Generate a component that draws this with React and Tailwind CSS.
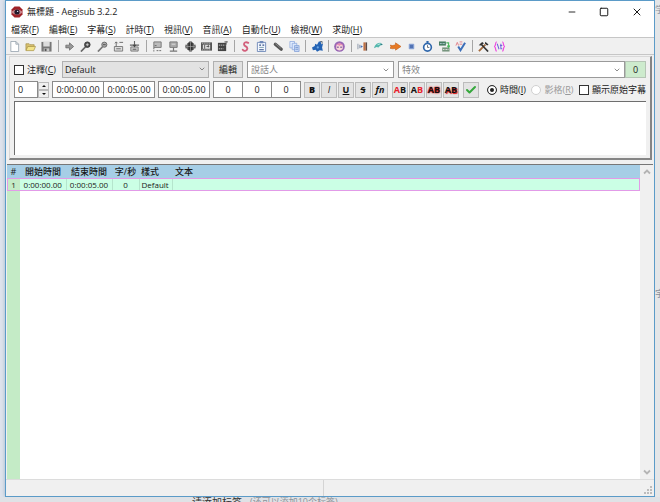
import { useState } from 'react'
import { Minus, Square, X, ChevronDown, Check } from 'lucide-react'

const MENUS = [
  ['檔案', 'F'],
  ['編輯', 'E'],
  ['字幕', 'S'],
  ['計時', 'T'],
  ['視訊', 'V'],
  ['音訊', 'A'],
  ['自動化', 'U'],
  ['檢視', 'W'],
  ['求助', 'H'],
]

// All toolbar glyphs share a 12x12 box
const ICONS = {
  new: <path d="M2 .5h5.5l3 3v8H2zM7.500 .5v3h3" fill="#fff" stroke="#8b98a5" strokeWidth=".8" />,
  open: (
    <>
      <path d="M1 10V3h3.500l1 1H10v2" fill="#d8c070" stroke="#a08c40" strokeWidth=".7" />
      <path d="M1 10.500 3 6h8.500l-2 4.500z" fill="#f3e38a" stroke="#a08c40" strokeWidth=".7" />
    </>
  ),
  save: (
    <>
      <path d="M.5 1h11v10.500H.5z" fill="#777" />
      <path d="M2.500 1h7v5h-7z" fill="#dcdcdc" />
      <path d="M3 8h6v3.500H3z" fill="#c8c8c8" />
      <path d="M4 8.500h2v2.500H4z" fill="#555" />
    </>
  ),
  jump: <path d="M2 4.500h4V2l4.500 4L6 10V7.500H2z" fill="#999" stroke="#666" strokeWidth=".8" />,
  zoomIn: (
    <>
      <path d="M1 11.500 6 6.500" stroke="#666" strokeWidth="1.800" />
      <circle cx="8" cy="4" r="3" fill="#555" stroke="#333" />
      <path d="M6.500 4h3M8 2.500v3" stroke="#ddd" strokeWidth=".8" />
    </>
  ),
  zoomOut: (
    <>
      <path d="M1 11.500 6 6.500" stroke="#777" strokeWidth="1.800" />
      <circle cx="8" cy="4" r="2.800" fill="#aaa" stroke="#666" />
      <path d="M6.500 4h3" stroke="#444" strokeWidth=".9" />
    </>
  ),
  subStart: (
    <>
      <path d="M1.500 6v5h9V6z" fill="#ddd" stroke="#777" />
      <path d="M3.500 6V1M2 2.500 3.500 1 5 2.500M7 1.500h4" stroke="#666" fill="none" />
      <path d="M3.500 8.500h5" stroke="#666" />
    </>
  ),
  subEnd: (
    <>
      <path d="M2 6.500v4.500h8V6.500z" fill="#ccc" stroke="#777" />
      <path d="M6 0v4M1 4.500h10" stroke="#666" strokeWidth="1.200" />
      <path d="m4 4 2 3 2-3z" fill="#444" />
      <path d="M4 9h4" stroke="#555" />
    </>
  ),
  snapStart: (
    <>
      <path d="M2 1h8v6H2z" fill="#bbb" stroke="#777" />
      <path d="M3 5h3M2 7v4.500M5 10.500h6" stroke="#666" strokeDasharray="2 1" />
    </>
  ),
  snapEnd: (
    <>
      <path d="M2 1h8v6H2z" fill="#aaa" stroke="#777" />
      <path d="M6 7v4M2 11h8" stroke="#777" strokeWidth="1.300" />
      <path d="M4 3.500h4" stroke="#ddd" />
    </>
  ),
  snapScene: (
    <>
      <circle cx="6" cy="6" r="4.800" fill="#333" />
      <path d="M0 6h12M6 1v10M3 2.500v7M9 2.500v7" stroke="#aaa" strokeWidth=".7" />
      <path d="M0 4v4M12 4v4M4.500 0h3M4.500 12h3" stroke="#333" />
    </>
  ),
  shift: (
    <>
      <path d="M0 1.500h12v9H0z" fill="#555" />
      <path d="M2 4h8v4.500H2z" fill="#ddd" />
      <path d="M4 4v4.500M6 6h3M8 4v3" stroke="#555" />
      <path d="M1 2.500h10M1 9.600h10" stroke="#ddd" strokeWidth=".8" strokeDasharray="1 1" />
    </>
  ),
  shiftPlay: (
    <>
      <path d="M1 2h9v9H1z" fill="#444" />
      <path d="M2 4.500h7M2 8.500h5" stroke="#ccc" strokeDasharray="1.500 .7" />
      <path d="M10 0v4M8 1h4" stroke="#666" />
    </>
  ),
  style: (
    <path d="M9 2C6 .5 4 2 4.500 4s4 2 3.500 4.500S4.500 11.500 3 9.500" fill="none" stroke="#d2607c" strokeWidth="2" strokeLinecap="round" />
  ),
  props: (
    <>
      <path d="M1.500 1.500h9v10h-9z" fill="#f4f8ff" stroke="#6f89b8" />
      <path d="M4 0h4v2.500H4z" fill="#6f89b8" />
      <path d="M3.500 4.500h2M7 4.500h2M3.500 9.500h5" stroke="#334f86" strokeWidth="1.200" />
      <path d="M3.500 7h5" stroke="#79a" />
    </>
  ),
  attach: (
    <>
      <path d="m2.500 3.500 6.500 5.500" stroke="#555" strokeWidth="3.500" strokeLinecap="round" />
      <path d="m2.500 2.800 6 5" stroke="#999" strokeWidth=".8" />
    </>
  ),
  fonts: (
    <>
      <path d="M1 .5h5v7H1z" fill="#e6efff" stroke="#86a5dc" strokeWidth=".8" />
      <path d="M3.500 2.500h5v7h-5z" fill="#dbe7fb" stroke="#86a5dc" strokeWidth=".8" />
      <path d="M6 5h5v6.500H6z" fill="#c6d8f6" stroke="#7d9bd5" strokeWidth=".8" />
      <path d="M7 7h3M7 9h3" stroke="#5678bd" strokeWidth=".7" />
    </>
  ),
  automation: (
    <>
      <path d="M0 7 3 5.500l.5-2.500 2 1L7.500.5h2L10 3.500l2-.5-1 4 .8 3.500-3.300-.5-3 1.800L4 9.500 1 10z" fill="#2463b4" />
      <circle cx="6.300" cy="7" r="1.200" fill="#6ba6e4" />
      <path d="M9 .5h2v2.500" fill="none" stroke="#345" strokeWidth=".8" />
    </>
  ),
  assdraw: (
    <>
      <circle cx="6" cy="6" r="5.800" fill="#9867b5" />
      <path d="M2.500 5C3 2 9 2 9.500 5v3C9 11 3 11 2.500 8z" fill="#f8d9d8" />
      <path d="M2 5.500c1-4 7-4 8 0L7.500 4 6 5.500 4 4z" fill="#e78bb5" />
      <path d="M4.300 6v1.600M7.700 6v1.600" stroke="#5d3a91" strokeWidth="1.200" />
    </>
  ),
  shiftTimes: (
    <>
      <path d="M1 3v6M3 4v4" stroke="#9aa4b4" strokeWidth="1.200" />
      <path d="M4 4.500v3l2.500-1.500z" fill="#456eb8" />
      <path d="M7 1.500h2.500v9H7z" fill="#c06f42" />
      <path d="M9.500 1.500h1.500v9H9.500z" fill="#5b4a47" />
    </>
  ),
  styleAssist: (
    <>
      <path d="M1 8c1-4 4-6 7-6l3 2-3 1-2 2-2-.5z" fill="#55b7ad" />
      <path d="M5 4 8 3" stroke="#c8f0ea" />
      <circle cx="9" cy="3.500" r=".6" fill="#246" />
    </>
  ),
  translate: <path d="M0 4.500 3 5l3-1V2L12 6l-6 4V8L3 8.500 0 8l1-1.800z" fill="#e77a24" stroke="#bd5915" strokeWidth=".6" />,
  resample: <path d="M3.500 3.500h5v5h-5z" fill="#5273b4" stroke="#8ca6d8" />,
  timing: (
    <>
      <circle cx="6" cy="6.800" r="4.200" fill="#fff" stroke="#2f67ac" strokeWidth="1.800" />
      <path d="M6 4.500v2.500h2" stroke="#345" fill="none" strokeWidth=".8" />
      <path d="M4.800.8h2.400M6 1v1.500" stroke="#2f67ac" strokeWidth="1.500" />
    </>
  ),
  kanji: (
    <>
      <path d="M0 .5h7.500v4.500H0z" fill="#467b61" />
      <path d="M1 2.800h5.500" stroke="#cde" strokeDasharray="1 .6" />
      <path d="M3.500 7h8v4.500h-8z" fill="#77957e" />
      <path d="M4.500 9.300h6" stroke="#eee" strokeDasharray="1 .6" />
      <path d="M8 2h2.500v4.500M9 5l1.500 2L12 5" fill="none" stroke="#4bb75d" strokeWidth="1.200" />
    </>
  ),
  spell: (
    <>
      <path d="m3.500 6 2.500 4L11 2" fill="none" stroke="#3d6fb9" strokeWidth="2.200" />
      <path d="m1 5 1.500-3.500L4 5M5 1h3M5 3.500h3" fill="none" stroke="#e07c85" />
    </>
  ),
  options: (
    <>
      <path d="M1 11 8 4" stroke="#a46a3c" strokeWidth="2" />
      <path d="m3 3 8 8.500" stroke="#333" strokeWidth="1.800" />
      <path d="M.8 4.500 4.500 1l2 1.500L3 5zM8 .8l3.500 3L10 5 7.500 3z" fill="#333" />
    </>
  ),
  tags: (
    <>
      <path d="M3 1C1 1 2.500 5 .5 6 2.500 7 1 11 3 11M9 1c2 0 .5 4 2.500 5-2 1-.5 5-2.500 5" fill="none" stroke="#ee4be0" strokeWidth="1.300" />
      <path d="m3.500 3 2 6M7.500 3v5.500H9M6.500 5H9" fill="none" stroke="#6c65da" strokeWidth="1.100" />
    </>
  ),
}

const TOOLS = [
  'new', 'open', 'save', '|',
  'jump', 'zoomIn', 'zoomOut', 'subStart', 'subEnd', '|',
  'snapStart', 'snapEnd', 'snapScene', 'shift', 'shiftPlay', '|',
  'style', 'props', 'attach', 'fonts', '|',
  'automation', '|',
  'assdraw', '|',
  'shiftTimes', 'styleAssist', 'translate', 'resample', 'timing', 'kanji', 'spell', '|',
  'options', 'tags',
]

const FORMATS = [
  ['粗體', <b className="font-black">B</b>],
  ['斜體', <i className="font-medium">I</i>],
  ['底線', <u>U</u>],
  ['刪除線', <s>S</s>],
  ['字型', <i>fn</i>],
]

const COLORS = [
  ['主要顏色', <><span className="text-[#e8202a]">A</span>B</>],
  ['次要顏色', <>A<span className="text-[#e8202a]">B</span></>],
  ['邊框顏色', <span className="[text-shadow:0_0_1px_#e00000,0_0_2px_#e00000]">AB</span>],
  ['陰影顏色', <span className="[text-shadow:1px_1px_1px_#e00000]">AB</span>],
]

const Hotkey = ({ text, k }) => (
  <span className="whitespace-nowrap">{text}(<u className="underline-offset-1">{k}</u>)</span>
)

const TimeField = ({ label, value, className }) => (
  <input
    aria-label={label}
    defaultValue={value}
    className={`h-[17px] min-w-0 border border-[#8a8a8a] bg-white text-center outline-none ${className}`}
  />
)

const Combo = ({ label, className }) => (
  <div className={`flex h-[17px] items-center border border-[#9a9a9a] bg-white ${className}`}>
    <input aria-label={label} placeholder={label} className="min-w-0 flex-1 px-[3px] outline-none placeholder:text-[#858585]" />
    <button aria-label={`${label}清單`} className="px-[3px]"><ChevronDown size={8} strokeWidth={2} className="text-[#555]" /></button>
  </div>
)

const FmtButton = ({ label, children }) => (
  <button aria-label={label} className="flex h-4 w-4 items-center justify-center border border-[#bcbcbc] bg-[#e3e3e3] text-[9px] font-bold text-[#111]">
    {children}
  </button>
)

function TitleBar() {
  return (
    <header className="flex h-[21px] shrink-0 items-center pl-[5px]">
      <svg viewBox="0 0 12 12" className="h-3 w-3" aria-hidden="true">
        <path d="M3.500.5h5l3 3v5l-3 3h-5l-3-3v-5z" fill="#9e2228" />
        <path d="M.5 6C3 2.500 9 2.500 11.500 6 9 9.500 3 9.500.5 6z" fill="#c98a90" />
        <circle cx="6" cy="6" r="2.600" fill="#20182a" />
        <circle cx="6.600" cy="5.400" r=".7" fill="#d8dcf0" />
      </svg>
      <h1 className="ml-1 flex-1 text-[9px]">無標題 - Aegisub 3.2.2</h1>
      <button aria-label="最小化" className="flex w-8 justify-center"><Minus size={10} strokeWidth={2.2} /></button>
      <button aria-label="最大化" className="flex w-8 justify-center"><Square size={10} strokeWidth={2.4} /></button>
      <button aria-label="關閉" className="flex w-[34px] justify-center"><X size={12} strokeWidth={2} /></button>
    </header>
  )
}

function EditBox({ comment, setComment, unit, setUnit }) {
  return (
    <section className="ml-[3px] mr-[2px] mt-px flex flex-col gap-[3px] border-b-2 border-l border-r-2 border-t border-b-[#858585] border-l-[#d8d8d8] border-r-[#858585] border-t-[#d8d8d8] p-1 pb-[3px]">
      <div className="flex items-center">
        <label className="flex w-12 items-center gap-[3px]">
          <input type="checkbox" checked={comment} onChange={e => setComment(e.target.checked)} className="h-[10px] w-[10px] shrink-0 appearance-none border border-[#333] bg-white checked:bg-[#333]" />
          <Hotkey text="注釋" k="C" />
        </label>
        <div className="relative w-[147px]">
          <select aria-label="樣式" className="block h-[17px] w-full appearance-none border border-[#b0b0b0] bg-[#e2e2e2] pl-[2px] outline-none">
            <option>Default</option>
          </select>
          <ChevronDown size={8} strokeWidth={2} className="pointer-events-none absolute right-[3px] top-1 text-[#555]" />
        </div>
        <button className="ml-1 h-[17px] w-[30px] border border-[#b0b0b0] bg-[#e2e2e2]">編輯</button>
        <Combo label="說話人" className="ml-1 w-[147px]" />
        <Combo label="特效" className="ml-1 flex-1" />
        <output className="flex h-[17px] w-[21px] items-center justify-center border border-[#b5c5b5] bg-[#cdebcd]">0</output>
      </div>

      <div className="flex items-center">
        <TimeField label="圖層" value="0" className="w-6 pl-[3px] text-left!" />
        <div className="flex h-4 w-[11px] flex-col">
          {['M2 5 4 3l2 2z', 'm2 3 2 2 2-2z'].map((d, i) => (
            <button key={d} aria-label={i ? '減少' : '增加'} className="flex h-2 items-center justify-center border border-[#bbb] bg-[#f0f0f0]">
              <svg viewBox="1 1 6 6" className="h-1.5 w-1.5"><path d={d} fill="#111" /></svg>
            </button>
          ))}
        </div>
        <TimeField label="開始時間" value="0:00:00.00" className="ml-[3px] w-[52px]" />
        <TimeField label="結束時間" value="0:00:05.00" className="-ml-px w-[52px]" />
        <TimeField label="持續時間" value="0:00:05.00" className="ml-[3px] w-[52px]" />
        <TimeField label="左邊距" value="0" className="ml-[3px] w-[30px]" />
        <TimeField label="右邊距" value="0" className="-ml-px w-[30px]" />
        <TimeField label="垂直邊距" value="0" className="-ml-px w-[30px]" />
        <div className="ml-[3px] flex gap-px">
          {FORMATS.map(([label, glyph]) => <FmtButton key={label} label={label}>{glyph}</FmtButton>)}
        </div>
        <div className="ml-1 flex gap-px">
          {COLORS.map(([label, glyph]) => <FmtButton key={label} label={label}>{glyph}</FmtButton>)}
        </div>
        <div className="ml-1 flex">
          <FmtButton label="提交"><Check size={12} strokeWidth={4} className="shrink-0 text-[#35a83c]" /></FmtButton>
        </div>
        <div className="ml-2 flex flex-1 items-center justify-between">
          <label className="flex items-center gap-[3px]">
            <input type="radio" name="unit" checked={unit === 'time'} onChange={() => setUnit('time')} className="h-[10px] w-[10px] shrink-0 appearance-none rounded-full border border-[#333] bg-white checked:shadow-[inset_0_0_0_2px_#fff] checked:bg-[#222]" />
            <Hotkey text="時間" k="I" />
          </label>
          <label className="flex items-center gap-[3px] text-[#9a9a9a]">
            <input type="radio" name="unit" disabled className="h-[10px] w-[10px] shrink-0 appearance-none rounded-full border border-[#d0d0d0] bg-white" />
            <Hotkey text="影格" k="R" />
          </label>
          <label className="flex items-center gap-[3px] whitespace-nowrap">
            <input type="checkbox" className="h-[10px] w-[10px] shrink-0 appearance-none border border-[#333] bg-white checked:bg-[#333]" />
            顯示原始字幕
          </label>
        </div>
      </div>

      <textarea aria-label="字幕文本" className="block h-[54px] w-full resize-none border-l border-t border-[#6e6e6e] bg-white outline-none" />
    </section>
  )
}

function SubsGrid() {
  return (
    <section className="mx-px mt-1 flex min-h-0 flex-1 border-t border-[#777]">
      <div className="flex min-w-0 flex-1 flex-col bg-white">
        <table className="w-full table-fixed border-collapse leading-[11px]">
          <colgroup>
            <col className="w-[13px]" />
            <col className="w-[46px]" />
            <col className="w-[46px]" />
            <col className="w-[27px]" />
            <col className="w-[33px]" />
            <col />
          </colgroup>
          <thead>
            <tr className="h-[13px] bg-[#a6cee6]">
              {['#', '開始時間', '結束時間', '字/秒'].map(h => <th key={h} className="whitespace-nowrap p-0 font-medium">{h}</th>)}
              <th className="p-0 pl-[2px] text-left font-medium">樣式</th>
              <th className="p-0 pl-[3px] text-left font-medium">文本</th>
            </tr>
          </thead>
          <tbody>
            <tr className="h-[13px] bg-[#cbffe5] text-center text-[8px] outline outline-1 -outline-offset-1 outline-[#e29be8]">
              <td className="bg-[#c4ebc6] p-0">1</td>
              <td className="border-r border-[#b5e5cd] p-0">0:00:00.00</td>
              <td className="border-r border-[#b5e5cd] p-0">0:00:05.00</td>
              <td className="border-r border-[#b5e5cd] p-0">0</td>
              <td className="border-r border-[#b5e5cd] p-0 pl-[2px] text-left">Default</td>
              <td className="p-0" />
            </tr>
          </tbody>
        </table>
        <div className="w-[13px] flex-1 bg-[#c4ebc6]" />
      </div>
      <div className="flex w-[13px] flex-col items-center justify-between bg-[#f0f0f0] py-[3px] text-[#b4b4b4]">
        <button aria-label="向上捲動"><svg viewBox="0 0 8 8" className="block h-2 w-2"><path d="m1 5.500 3-3 3 3" fill="none" stroke="currentColor" strokeWidth="1.800" /></svg></button>
        <button aria-label="向下捲動"><svg viewBox="0 0 8 8" className="block h-2 w-2"><path d="m1 2.500 3 3 3-3" fill="none" stroke="currentColor" strokeWidth="1.800" /></svg></button>
      </div>
    </section>
  )
}

export default function App() {
  const [comment, setComment] = useState(false)
  const [unit, setUnit] = useState('time')

  return (
    <div className="flex h-screen flex-col overflow-hidden bg-[#e3e6eb] font-['Open_Sans','Noto_Sans_CJK_TC',sans-serif] text-[9px] leading-3 text-[#1a1a1a]">
      <div className="flex min-h-0 flex-1">
        <div className="w-[5px] shrink-0 bg-[#dfe3ec]" />
        <main className="flex min-w-0 flex-1 flex-col border border-[#5b9bc8] bg-[#f0f0f0] shadow-[0_0_4px_#9fb6c8]">
          <div className="bg-white">
            <TitleBar />
            <nav className="flex h-[15px] items-center gap-[10px] pl-[5px]">
              {MENUS.map(([text, k]) => <button key={k}><Hotkey text={text} k={k} /></button>)}
            </nav>
          </div>
          <div role="toolbar" className="flex h-[18px] shrink-0 items-center border-b border-t border-[#c6c6c6]">
            <div className="flex w-[502px] items-center justify-between">
              {TOOLS.map((name, i) => name === '|'
                ? <div key={i} className="flex w-1.5 justify-center"><div className="h-3 w-px bg-[#a5a5a5]" /></div>
                : (
                  <button key={name} aria-label={name} className="flex w-4 justify-center">
                    <svg viewBox="0 0 12 12" fill="none" className="h-[11px] w-[11px]">{ICONS[name]}</svg>
                  </button>
                ))}
            </div>
          </div>
          <EditBox comment={comment} setComment={setComment} unit={unit} setUnit={setUnit} />
          <SubsGrid />
          <footer className="flex h-[17px] shrink-0 border-t border-[#dcdcdc]">
            <div className="w-[318px] border-r border-[#d4d4d4]" />
            <div className="flex flex-1 items-end justify-end p-px">
              <svg viewBox="0 0 9 9" className="h-[9px] w-[9px]" fill="#bcbcbc">
                <path d="M6 0h2v2H6zM3 3h2v2H3zM6 3h2v2H6zM0 6h2v2H0zM3 6h2v2H3zM6 6h2v2H6z" />
              </svg>
            </div>
          </footer>
        </main>
        <aside className="flex w-[5px] shrink-0 flex-col overflow-hidden bg-[#e4e6e8] pt-1 text-[#8a8f98]">
          <span className="h-[284px]">学</span>
          <span>字</span>
        </aside>
      </div>
      <div className="flex h-[5px] shrink-0 gap-2 overflow-hidden bg-[#dfe2e6] pl-[192px] text-[10px] leading-[10px] text-[#333]">
        <span>请添加标签</span>
        <span className="text-[9px] text-[#8d9299]">(还可以添加10个标签)</span>
      </div>
    </div>
  )
}
